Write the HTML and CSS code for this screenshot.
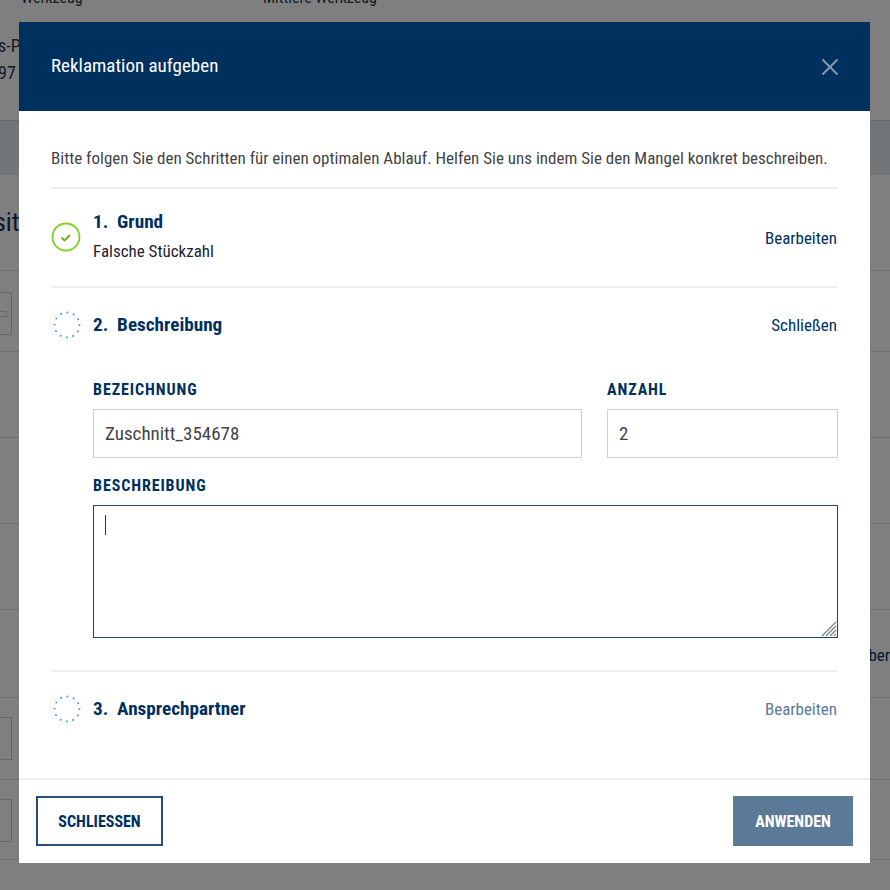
FILE: index.html
```html
<!DOCTYPE html>
<html lang="de">
<head>
  <meta charset="UTF-8" />
  <title>Reklamation aufgeben</title>
  <link rel="stylesheet" href="styles.css">
</head>
<body>
<div class="page">
  <div class="page-top">
    <span class="top-a">Werkzeug</span>
    <span class="top-b">Mittlere Werkzeug</span>
  </div>
  <div class="page-address">
    <div>s-P</div>
    <div>97 I</div>
  </div>
  <div class="page-band"></div>
  <div class="page-title">sit</div>
  <div class="page-row page-row-first">
    <span class="thumb"><span class="thumb-pill"></span></span>
  </div>
  <div class="page-row"></div>
  <div class="page-row"></div>
  <div class="page-row"></div>
  <div class="page-row page-row-more"><span class="page-more">ber</span></div>
  <div class="page-row page-row-thumb"><span class="thumb"></span></div>
  <div class="page-row page-row-thumb page-row-end"><span class="thumb"></span></div>
</div>

<div class="overlay">
  <div class="modal">
    <div class="modal-header">
      <span class="modal-title">Reklamation aufgeben</span>
      <button class="close-btn" aria-label="Schließen">
        <svg width="18" height="18" viewBox="0 0 18 18" fill="none" stroke="currentColor" stroke-width="2">
          <line x1="1.5" y1="1.5" x2="16.5" y2="16.5" />
          <line x1="16.5" y1="1.5" x2="1.5" y2="16.5" />
        </svg>
      </button>
    </div>

    <div class="modal-body">
      <p class="intro">Bitte folgen Sie den Schritten für einen optimalen Ablauf. Helfen Sie uns indem Sie den Mangel konkret beschreiben.</p>

      <div class="step step-done">
        <svg class="step-icon" width="30" height="30" viewBox="0 0 30 30" fill="none">
          <circle cx="15" cy="15" r="13.5" stroke="#7ed321" stroke-width="1.8" />
          <path d="M10.5 15.5l3 3 5.5-5.5" stroke="#6fae1c" stroke-width="1.8" />
        </svg>
        <div class="step-text">
          <div class="step-title">1.&nbsp; Grund</div>
          <div class="step-value">Falsche Stückzahl</div>
        </div>
        <a class="step-link">Bearbeiten</a>
      </div>

      <div class="step step-open">
        <div class="step-line">
          <svg class="step-icon" width="30" height="30" viewBox="0 0 30 30" fill="none">
            <circle cx="16" cy="15" r="12.5" stroke="#4a9df5" stroke-width="2" stroke-linecap="round" stroke-dasharray="0.1 6.445" />
          </svg>
          <div class="step-text">
            <div class="step-title">2.&nbsp; Beschreibung</div>
          </div>
          <a class="step-link">Schließen</a>
        </div>
        <div class="form">
          <div class="form-row">
            <label class="field field-wide">
              <span class="field-label">Bezeichnung</span>
              <input class="field-input" type="text" value="Zuschnitt_354678" />
            </label>
            <label class="field field-small">
              <span class="field-label">Anzahl</span>
              <input class="field-input" type="text" value="2" />
            </label>
          </div>
          <label class="field field-area">
            <span class="field-label">Beschreibung</span>
            <span class="textarea">
              <span class="caret"></span>
              <svg class="grip" width="16" height="16" viewBox="0 0 16 16" stroke="#77818c" stroke-width="1.2">
                <line x1="1" y1="15" x2="15" y2="1" />
                <line x1="5" y1="15" x2="15" y2="5" />
                <line x1="9" y1="15" x2="15" y2="9" />
                <line x1="13" y1="15" x2="15" y2="13" />
              </svg>
            </span>
          </label>
        </div>
      </div>

      <div class="step step-last">
        <svg class="step-icon" width="30" height="30" viewBox="0 0 30 30" fill="none">
          <circle cx="16" cy="15" r="12.5" stroke="#4a9df5" stroke-width="2" stroke-linecap="round" stroke-dasharray="0.1 6.445" />
        </svg>
        <div class="step-text">
          <div class="step-title">3.&nbsp; Ansprechpartner</div>
        </div>
        <a class="step-link step-link-muted">Bearbeiten</a>
      </div>
    </div>

    <div class="modal-footer">
      <button class="btn btn-outline">Schliessen</button>
      <button class="btn btn-solid">Anwenden</button>
    </div>
  </div>
</div>
</body>
</html>
```

FILE: styles.css
```css
* {
  box-sizing: border-box;
}

html, body {
  height: 100%;
}

body {
  margin: 0;
  font-family: 'Roboto Condensed', 'Roboto', sans-serif;
  font-stretch: 75%;
  background: #fff;
  overflow: hidden;
}

/* page behind the dialog */
.page {
  height: 890px;
  overflow: hidden;
  color: #2b3a4a;
}
.page-top {
  display: flex;
  height: 8px;
  font-size: 16px;
  line-height: 8px;
  padding-left: 21px;
}
.top-a {
  width: 242px;
  margin-top: -6px;
}
.top-b {
  margin-top: -6px;
}
.page-address {
  height: 112px;
  padding-top: 24px;
  margin-left: -2px;
  font-size: 18px;
  line-height: 27px;
  word-spacing: -1px;
}
.page-band {
  height: 55px;
  background: #e2eaf0;
  border-top: 1px solid #c4ccd4;
}
.page-title {
  height: 96px;
  padding-top: 30px;
  margin-left: -6px;
  font-size: 26px;
  line-height: 34px;
  color: #0b3560;
  border-bottom: 1px solid #ddd;
}
.page-row {
  height: 86px;
  border-bottom: 1px solid #ddd;
  text-align: right;
}
.page-row-first {
  height: 81px;
  padding-top: 21px;
  text-align: left;
}
.page-row-more {
  height: 88px;
}
.page-row-thumb {
  height: 82px;
  padding-top: 19px;
  text-align: left;
}
.page-row-end {
  height: 80px;
}
.page-more {
  display: inline-block;
  margin-top: 35px;
  font-size: 17px;
  color: #0b3560;
}
.thumb {
  display: flex;
  align-items: center;
  width: 12px;
  height: 43px;
  border: 1px solid #ccc;
  border-left: 0;
}
.thumb-pill {
  width: 7px;
  height: 6px;
  border: 1px solid #ccc;
  border-left: 0;
}

.overlay {
  position: fixed;
  inset: 0;
  background: rgba(0, 0, 0, 0.5);
  display: flex;
  padding: 22px 19px 0;
}

/* dialog */
.modal {
  width: 851px;
  height: 841px;
  background: #fff;
  display: flex;
  flex-direction: column;
}
.modal-header {
  height: 89px;
  flex-shrink: 0;
  background: #00305e;
  color: #fff;
  display: flex;
  align-items: center;
  justify-content: space-between;
  padding: 0 31px 0 32px;
}
.modal-title {
  font-size: 19px;
  margin-bottom: 2px;
}
.close-btn {
  width: 18px;
  height: 18px;
  padding: 0;
  border: none;
  background: none;
  color: #8799ae;
  display: flex;
}

.modal-body {
  flex: 1;
  padding: 0 32px;
}
.intro {
  margin: 0;
  height: 78px;
  padding-top: 36px;
  font-size: 17px;
  line-height: 22px;
  color: #444;
  border-bottom: 2px solid #eceef1;
  white-space: nowrap;
}

.step {
  display: flex;
  align-items: center;
}
.step-done {
  height: 99px;
  border-bottom: 2px solid #eceef1;
}
.step-done .step-icon {
  margin-bottom: 2px;
}
.step-done .step-text {
  padding-bottom: 2px;
}
.step-open {
  display: block;
  height: 384px;
  border-bottom: 2px solid #eceef1;
}
.step-line {
  display: flex;
  align-items: center;
  height: 74px;
}
.step-last {
  height: 74px;
}
.step-icon {
  flex-shrink: 0;
  margin-right: 12px;
}
.step-text {
  flex: 1;
}
.step-title {
  font-size: 19.2px;
  line-height: 24px;
  font-weight: 700;
  color: #00305e;
}
.step-value {
  font-size: 17px;
  line-height: 24px;
  color: #1c2430;
  margin-top: 5px;
}
.step-link {
  font-size: 17px;
  color: #00305e;
  margin-right: 1px;
}
.step-link-muted {
  color: #5b7a98;
}

.form {
  padding-top: 19px;
  padding-left: 42px;
}
.form-row {
  display: flex;
  gap: 25px;
}
.field {
  display: block;
}
.field-wide {
  flex: 0 0 489px;
}
.field-small {
  flex: 1;
}
.field-area {
  margin-top: 19px;
}
.field-label {
  display: block;
  font-size: 16px;
  line-height: 18px;
  font-weight: 700;
  letter-spacing: 0.9px;
  text-transform: uppercase;
  color: #00305e;
  margin-bottom: 10px;
}
.field-input {
  display: block;
  width: 100%;
  height: 49px;
  border: 1px solid #cdd1d8;
  padding: 0 11px;
  font-family: inherit;
  font-stretch: inherit;
  font-size: 19px;
  color: #444;
  outline: none;
  border-radius: 0;
}
.textarea {
  display: block;
  position: relative;
  height: 133px;
  border: 1px solid #1b4674;
}
.caret {
  position: absolute;
  left: 11px;
  top: 9px;
  width: 1px;
  height: 20px;
  background: #333;
}
.grip {
  position: absolute;
  right: 0;
  bottom: 0;
}

/* footer */
.modal-footer {
  height: 85px;
  flex-shrink: 0;
  border-top: 2px solid #eceef1;
  display: flex;
  justify-content: space-between;
  align-items: flex-start;
  padding: 16px 17px 0;
}
.btn {
  height: 50px;
  font-family: inherit;
  font-stretch: inherit;
  font-size: 16px;
  font-weight: 700;
  text-transform: uppercase;
  border-radius: 0;
  padding: 0;
}
.btn-outline {
  width: 127px;
  background: #fff;
  color: #00305e;
  border: 2px solid #2a4d78;
}
.btn-solid {
  width: 120px;
  background: #5b7a98;
  color: #fff;
  border: none;
}
```
